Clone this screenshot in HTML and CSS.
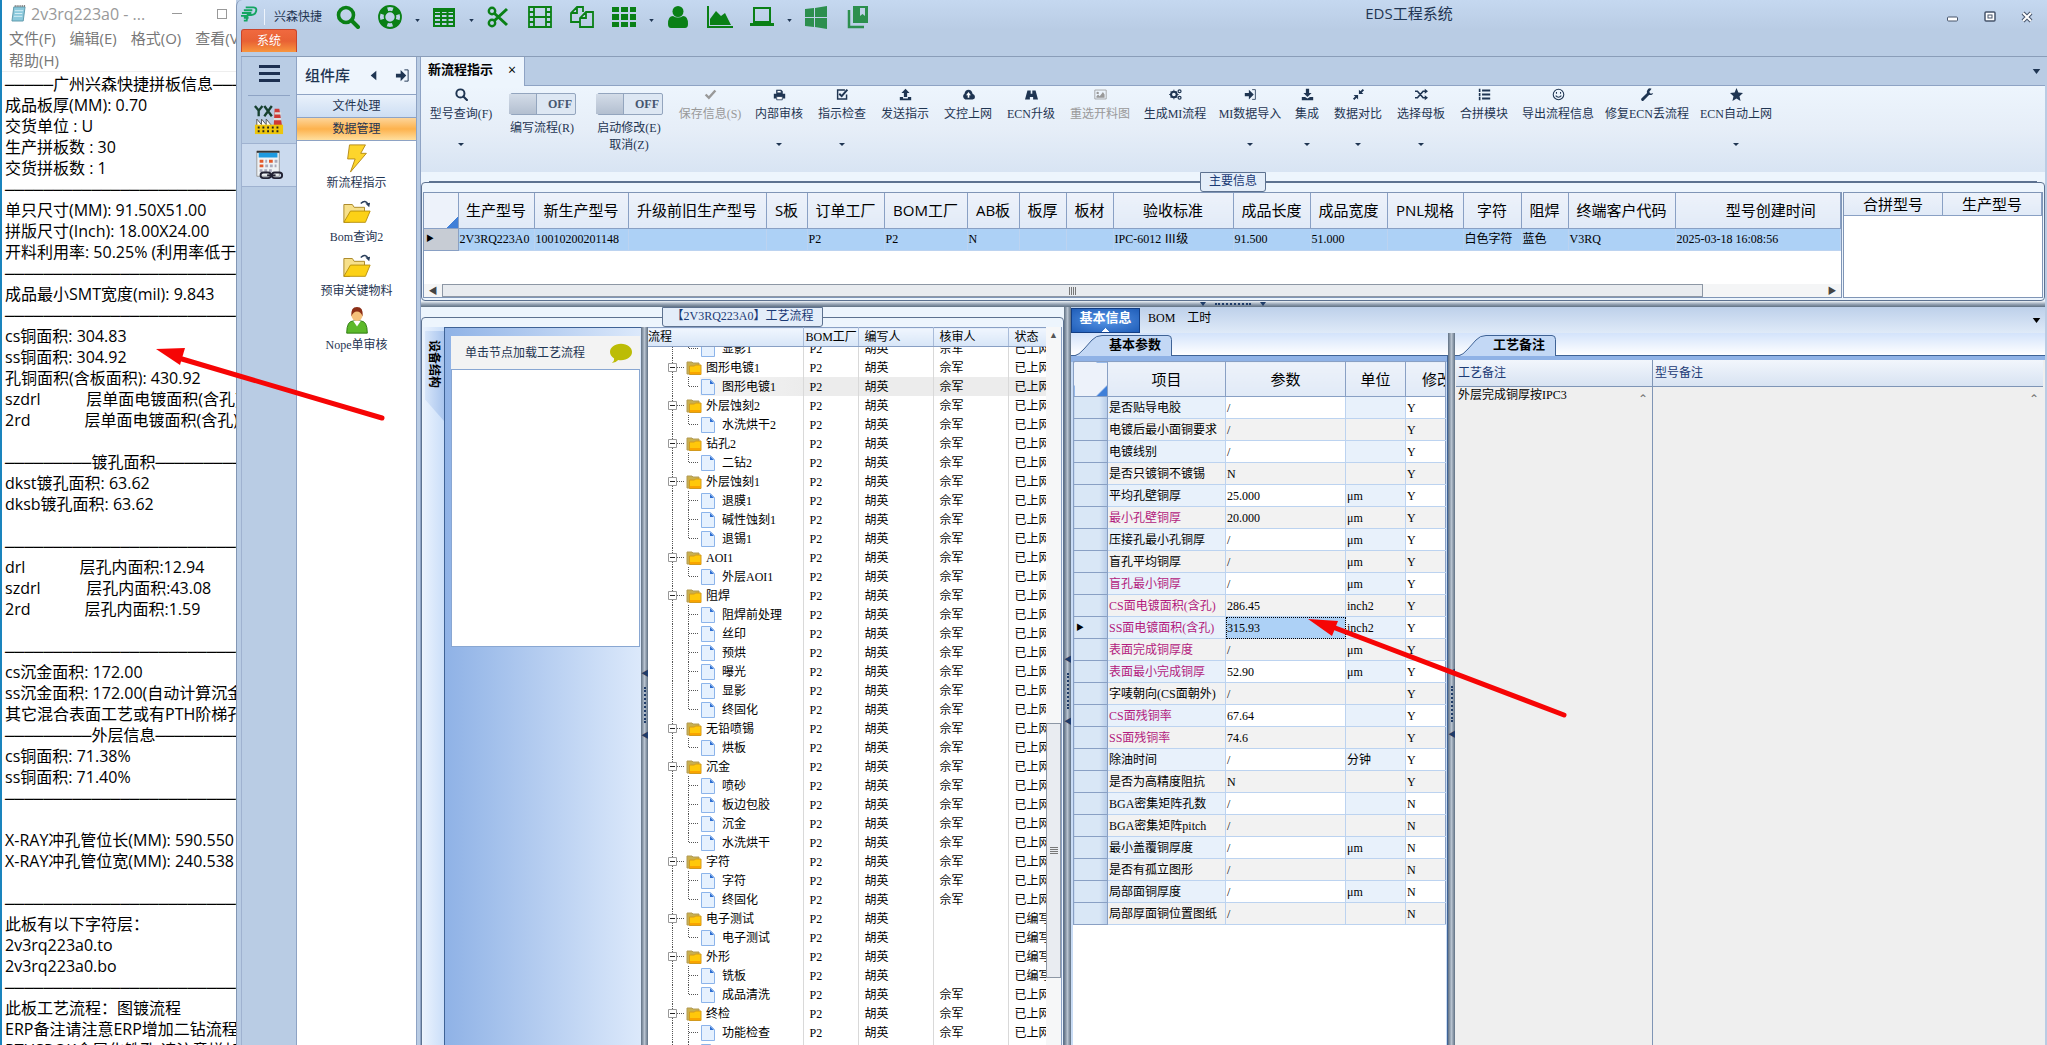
FILE: index.html
```html
<!DOCTYPE html>
<html lang="zh-CN">
<head>
    <meta charset="UTF-8">
    <meta name="viewport" content="width=device-width, initial-scale=1.0">
    <title>EDS工程系统</title>
    <link rel="stylesheet" href="styles.css">
</head>
<body>
    <!-- Shared icons -->
    <svg class="defs" aria-hidden="true">
        <symbol id="i-search" viewBox="0 0 24 24"><circle cx="10" cy="10" r="7.5" fill="none" stroke="currentColor" stroke-width="3.6"/><path d="M15.5 15.5L22 22" stroke="currentColor" stroke-width="4" stroke-linecap="round"/></symbol>
        <symbol id="i-login" viewBox="0 0 16 16"><path d="M1 6h5V2l6 6-6 6v-4H1z" fill="currentColor"/><path d="M10 2h4v12h-4" fill="none" stroke="currentColor"/></symbol>
        <symbol id="i-caret" viewBox="0 0 6 4"><path d="M0 0h6L3 4z" fill="currentColor"/></symbol>
        <symbol id="i-open" viewBox="0 0 36 19"><path d="M24.5 0v19M29 9.500h7" stroke="#555" stroke-dasharray="1 1"/><path d="M20.500 5.500h8v8h-8z" fill="#fff" stroke="#999"/><path d="M22 9.500h5" stroke="#222"/></symbol>
        <symbol id="i-mid" viewBox="0 0 52 19"><path d="M24.500 0v19M40.500 0v19M41 9.500h10" stroke="#555" stroke-dasharray="1 1"/></symbol>
        <symbol id="i-last" viewBox="0 0 52 19"><path d="M24.500 0v19M40.500 0v9M41 9.500h10" stroke="#555" stroke-dasharray="1 1"/></symbol>
        <symbol id="i-folder" viewBox="0 0 16 16"><path d="M1 2h5l1 1h6v11H1z" fill="#c9b04e" stroke="#b39a55"/><path d="M3.500 6h5l1-1H15v9.500H3.500z" fill="#ffc80a" stroke="#d29a1e"/><path d="M4 12h11v2H4z" fill="#f9a400"/></symbol>
        <symbol id="i-doc" viewBox="0 0 14 16"><path d="M.5 .5h9l4 4v11H.5z" fill="#e6f1fe" stroke="#8cb4ea"/><path d="M9 1v4h4z" fill="#2e6fd2"/></symbol>
        <symbol id="i-folder-open" viewBox="0 0 32 26"><path d="M2 5h9l2 3h11v4L8 24H2z" fill="#f7e08a" stroke="#a98522"/><path d="M2 24L9 12h21l-5 12z" fill="#fcd116" stroke="#b8900e"/><path d="M20 4q5-5 8 1" fill="none" stroke="#2b3f5c" stroke-width="1.500"/><path d="M25 4l5-1-1 5z" fill="#2b3f5c"/></symbol>
    </svg>

    <section class="notepad">
        <header class="np-title">
            <svg class="np-icon" viewBox="0 0 16 18"><path d="M3 2h12l-2 15H1z" fill="#8cc9dc" stroke="#5c97aa"/><path d="M4 1h11" stroke="#777" stroke-width="2" stroke-dasharray="1 1"/><path d="M4 6h9M4 9h8M3 12h9" stroke="#d9f0f6"/></svg>
            <span>2v3rq223a0 - ...</span>
            <button class="np-min" aria-label="最小化"></button>
            <button class="np-max" aria-label="最大化"></button>
        </header>
        <nav class="np-menu">
            <a href="#">文件(F)</a><a href="#">编辑(E)</a><a href="#">格式(O)</a><a href="#">查看(V)</a><a href="#">帮助(H)</a>
        </nav>
        <textarea class="np-text" aria-label="文本" wrap="off" spellcheck="false">
─────广州兴森快捷拼板信息─────
成品板厚(MM): 0.70
交货单位 : U
生产拼板数 : 30
交货拼板数 : 1
─────────────────────────
单只尺寸(MM): 91.50X51.00
拼版尺寸(Inch): 18.00X24.00
开料利用率: 50.25% (利用率低于
─────────────────────────
成品最小SMT宽度(mil): 9.843
─────────────────────────
cs铜面积: 304.83
ss铜面积: 304.92
孔铜面积(含板面积): 430.92
szdrl           层单面电镀面积(含孔)
2rd             层单面电镀面积(含孔)

─────────镀孔面积─────────
dkst镀孔面积: 63.62
dksb镀孔面积: 63.62

─────────────────────────
drl             层孔内面积:12.94
szdrl           层孔内面积:43.08
2rd             层孔内面积:1.59

─────────────────────────
cs沉金面积: 172.00
ss沉金面积: 172.00(自动计算沉金
其它混合表面工艺或有PTH阶梯孔
─────────外层信息─────────
cs铜面积: 71.38%
ss铜面积: 71.40%
─────────────────────────

X-RAY冲孔管位长(MM): 590.550
X-RAY冲孔管位宽(MM): 240.538

─────────────────────────
此板有以下字符层：
2v3rq223a0.to
2v3rq223a0.bo
─────────────────────────
此板工艺流程：图镀流程
ERP备注请注意ERP增加二钻流程
PTHSROK金属化铣孔,请注意增加</textarea>
    </section>

    <main class="app">
        <header class="titlebar">
            <div class="quick">
                <svg class="logo" viewBox="0 0 18 18"><path d="M5 2h8q4 0 3 4t-5 4H7l-1 6H3M3 5h9M1 8h10M0 11h6M3 13h5" fill="none" stroke="#14a562" stroke-width="2"/></svg>
                <span class="brand">兴森快捷</span>
                <button class="q search" aria-label="搜索"><svg viewBox="0 0 24 24"><use href="#i-search"/></svg></button>
                <button class="q wide" aria-label="帮助"><svg viewBox="0 0 24 24"><circle cx="12" cy="12" r="8.200" fill="none" stroke="currentColor" stroke-width="6" stroke-dasharray="7.500 5.380" stroke-dashoffset="-2.700"/><circle cx="12" cy="12" r="11" fill="none" stroke="currentColor" stroke-width="1.800"/><circle cx="12" cy="12" r="5.500" fill="none" stroke="currentColor" stroke-width="1.600"/></svg><svg class="caret"><use href="#i-caret"/></svg></button>
                <button class="q wide" aria-label="表格"><svg viewBox="0 0 24 24"><path d="M2 4h20v17H2zM2 9h20M2 13h20M2 17h20M9 6v15M15.500 6v15" fill="none" stroke="currentColor" stroke-width="2"/><path d="M2 3h20v4H2z" fill="currentColor"/></svg><svg class="caret"><use href="#i-caret"/></svg></button>
                <button class="q" aria-label="剪切"><svg viewBox="0 0 24 24"><circle cx="6" cy="6" r="3.200" fill="none" stroke="currentColor" stroke-width="2.400"/><circle cx="6" cy="18" r="3.200" fill="none" stroke="currentColor" stroke-width="2.400"/><path d="M8 8l13 12M8 16L21 4" stroke="currentColor" stroke-width="3"/></svg></button>
                <button class="q" aria-label="影片"><svg viewBox="0 0 24 24"><path d="M1 2h22v20H1zM6 2v20M18 2v20M6 12h12M1 7h5M1 12h5M1 17h5M18 7h5M18 12h5M18 17h5" fill="none" stroke="currentColor" stroke-width="1.800"/></svg></button>
                <button class="q" aria-label="复制"><svg viewBox="0 0 24 24"><path d="M10 17H1V8l6-6h6v5M7 2v6H1M16 7h7v15H10V13zM16 7v6h-6" fill="none" stroke="currentColor" stroke-width="1.800"/></svg></button>
                <button class="q wide" aria-label="模块"><svg viewBox="0 0 24 24"><path d="M0 2h7v5H0zM9 2h7v5H9zM18 2h6v5h-6zM0 9h7v6H0zM9 9h7v6H9zM18 9h6v6h-6zM0 17h7v5H0zM9 17h7v5H9zM18 17h6v5h-6z" fill="currentColor"/></svg><svg class="caret"><use href="#i-caret"/></svg></button>
                <button class="q" aria-label="用户"><svg viewBox="0 0 24 24"><circle cx="12" cy="6.500" r="5.500" fill="currentColor"/><path d="M5 23q-3 0-3-4 0-8 5-8 5 3 10 0 5 0 5 8 0 4-3 4z" fill="currentColor"/></svg></button>
                <button class="q" aria-label="图表"><svg viewBox="0 0 26 24"><path d="M1 1v21h25" fill="none" stroke="currentColor" stroke-width="2"/><path d="M3 20v-6l6-8 5 5 4-3 6 12z" fill="currentColor"/></svg></button>
                <button class="q wide" aria-label="电脑"><svg viewBox="0 0 24 24"><path d="M4 3h16v14H4z" fill="none" stroke="currentColor" stroke-width="2"/><path d="M0 18h24v3H0z" fill="currentColor"/></svg><svg class="caret"><use href="#i-caret"/></svg></button>
                <button class="q sea" aria-label="窗口"><svg viewBox="0 0 24 24"><path d="M1 4l9-1v9H1zM11 3l12-2v11H11zM1 13h9v9l-9-1zM11 13h12v11l-12-2z" fill="currentColor"/></svg></button>
                <button class="q sea" aria-label="收藏"><svg viewBox="0 0 24 24"><path d="M7 1h15v17H7z" fill="currentColor"/><path d="M14 3h5v8l-2.500-2-2.500 2z" fill="#bfd1e9"/><path d="M3 5v17h15" fill="none" stroke="currentColor" stroke-width="2.500"/></svg></button>
            </div>
            <h1>EDS工程系统</h1>
            <div class="winbtns">
                <button aria-label="最小化"><svg viewBox="0 0 12 12"><rect x=".5" y="6" width="10" height="4" rx="1" fill="#fff" stroke="#46546b"/></svg></button>
                <button aria-label="还原"><svg viewBox="0 0 12 12"><rect x="1" y="1" width="10" height="9" rx="1" fill="#fff" stroke="#46546b" stroke-width="1.500"/><rect x="4" y="4" width="4" height="3" fill="#fff" stroke="#46546b"/></svg></button>
                <button aria-label="关闭"><svg viewBox="0 0 12 12"><path d="M2 2l8 8M10 2l-8 8" stroke="#46546b" stroke-width="4"/><path d="M2 2l8 8M10 2l-8 8" stroke="#fff" stroke-width="2"/></svg></button>
            </div>
            <button class="sys-tab">系统</button>
        </header>

        <div class="workspace">
            <nav class="rail">
                <button class="burger" aria-label="菜单"><i></i><i></i><i></i></button>
                <button class="rail-item" aria-label="工厂"><svg viewBox="0 0 32 32"><path d="M1 1l4 5v6M9 1L5 6M11 1l8 11M19 1l-8 11" fill="none" stroke="#16402f" stroke-width="2.500"/><path d="M22 4h5l3 19h-9z" fill="#cf3a36"/><path d="M22 9h7M21 15h8" stroke="#ddd" stroke-width="2.500"/><path d="M3 22v-7l5 6v-6l5 6v-6l5 6v2z" fill="#fff" stroke="#555"/><path d="M1 21h30v10H1z" fill="#edc50b"/><path d="M4 24h25M4 28h25" stroke="#222" stroke-width="2" stroke-dasharray="2 3"/></svg></button>
                <button class="rail-item active" aria-label="数据"><svg viewBox="0 0 32 32"><path d="M3 1h24v27H3z" fill="#eef2f5" stroke="#999"/><path d="M3 1h24v2H3z" fill="#333"/><path d="M5 3h20v5H5z" fill="#1d9ae0"/><path d="M6 12h4M16 12h4M6 17h4" stroke="#e25a2b" stroke-width="3"/><path d="M12 12h2M22 12h3M12 17h12M6 22h14" stroke="#aab" stroke-width="3" stroke-dasharray="3 2"/><rect x="7" y="24" width="11" height="6" rx="3" fill="none" stroke="#223" stroke-width="2"/><rect x="19" y="24" width="11" height="6" rx="3" fill="none" stroke="#223" stroke-width="2"/><path d="M14 27h9" stroke="#223" stroke-width="2"/></svg></button>
            </nav>

            <aside class="library">
                <div class="lib-head">
                    <h2>组件库</h2>
                    <button aria-label="折叠"><svg viewBox="0 0 16 16"><path d="M11 3v10L5 8z" fill="currentColor"/></svg></button>
                    <button aria-label="固定"><svg viewBox="0 0 16 16"><use href="#i-login"/></svg></button>
                </div>
                <button class="lib-group">文件处理</button>
                <button class="lib-group on">数据管理</button>
                <button class="lib-item"><svg viewBox="0 0 32 32"><path d="M8 2h17l-5 9h6L9 31l5-14H6z" fill="#fdd52c" stroke="#b48a17"/></svg>新流程指示</button>
                <button class="lib-item"><svg viewBox="0 0 32 26"><use href="#i-folder-open"/></svg>Bom查询2</button>
                <button class="lib-item"><svg viewBox="0 0 32 26"><use href="#i-folder-open"/></svg>预审关键物料</button>
                <button class="lib-item"><svg viewBox="0 0 32 32"><path d="M5 30q0-13 7-13h8q7 0 7 13z" fill="#5cb92a" stroke="#2d7a10"/><path d="M12 17l4 6 4-6z" fill="#fff"/><circle cx="16" cy="11" r="6" fill="#f5c07a"/><path d="M10 12q-1-10 6-10t6 10q-2-5-6-5t-6 5z" fill="#8c2e16"/></svg>Nope单审核</button>
            </aside>

            <section class="page">
                <div class="page-tabs">
                    <button class="page-tab">新流程指示 <span>×</span></button>
                    <svg class="more"><use href="#i-caret"/></svg>
                </div>

                <div class="ribbon">
                    <button class="tool c5 drop"><svg viewBox="0 0 24 24"><use href="#i-search"/></svg>型号查询(F)</button>
                    <label class="switch"><span class="track"><input type="checkbox"><b>OFF</b></span>编写流程(R)</label>
                    <label class="switch"><span class="track"><input type="checkbox"><b>OFF</b></span>启动修改(E)<br>取消(Z)</label>
                    <button class="tool c5 off" disabled><svg viewBox="0 0 16 16"><path d="M2 8l4 4 8-9" fill="none" stroke="currentColor" stroke-width="3"/></svg>保存信息(S)</button>
                    <button class="tool c4 drop"><svg viewBox="0 0 16 16"><path d="M4 7V2h6l2 2v3M1 13V7h14v6h-3v-2H4v2z" fill="currentColor"/><path d="M4.500 10.500h7v4h-7zM5 3h5v3H5z" fill="#fff" stroke="currentColor"/></svg>内部审核</button>
                    <button class="tool c4 drop"><svg viewBox="0 0 16 16"><path d="M13 8v5.500H2v-11h9" fill="none" stroke="currentColor" stroke-width="1.800"/><path d="M4 7l3 3 7-8" fill="none" stroke="currentColor" stroke-width="2.500"/></svg>指示检查</button>
                    <button class="tool c4"><svg viewBox="0 0 16 16"><path d="M8 1l5 5h-3v5H6V6H3zM1 11h4v2h6v-2h4v4H1z" fill="currentColor"/></svg>发送指示</button>
                    <button class="tool c4"><svg viewBox="0 0 16 16"><path d="M4 14a4 4 0 0 1-1-7q1-5 5-5t5 5q3 1 3 4t-3 3z" fill="currentColor"/><path d="M8 5l3 4H9v3H7V9H5z" fill="#fff"/></svg>文控上网</button>
                    <button class="tool c4"><svg viewBox="0 0 16 16"><path d="M3 3h4v4h2V3h4l3 11h-6v-3H6v3H0z" fill="currentColor"/></svg>ECN升级</button>
                    <button class="tool c5 off" disabled><svg viewBox="0 0 16 16"><path d="M1 2.500h14v11H1z" fill="none" stroke="currentColor"/><circle cx="4.500" cy="6" r="1.500" fill="currentColor"/><path d="M3 12v-2l2-2 2 2 4-5 2 3v4z" fill="currentColor"/></svg>重选开料图</button>
                    <button class="tool c5"><svg viewBox="0 0 16 16"><circle cx="6" cy="8" r="3.500" fill="none" stroke="currentColor" stroke-width="2.500"/><path d="M6 2v12M0 8h12M2 4l8 8M10 4l-8 8" stroke="currentColor" stroke-width="1" stroke-dasharray="2.500 7"/><circle cx="13" cy="4" r="1.800" fill="none" stroke="currentColor" stroke-width="1.500"/><circle cx="13" cy="12" r="1.800" fill="none" stroke="currentColor" stroke-width="1.500"/></svg>生成MI流程</button>
                    <button class="tool c5 drop"><svg viewBox="0 0 16 16"><use href="#i-login"/></svg>MI数据导入</button>
                    <button class="tool c2 drop"><svg viewBox="0 0 16 16"><path d="M6 1h4v5h3l-5 5-5-5h3zM1 11h4l3 2 3-2h4v4H1z" fill="currentColor"/></svg>集成</button>
                    <button class="tool c4 drop"><svg viewBox="0 0 16 16"><path d="M14 2l-4 4M2 14l4-4" stroke="currentColor" stroke-width="2.500"/><path d="M8.500 2v5.500H14zM7.500 14V8.500H2z" fill="currentColor"/></svg>数据对比</button>
                    <button class="tool c4 drop"><svg viewBox="0 0 16 16"><path d="M0 4h3l7 8h3M0 12h3l7-8h3" fill="none" stroke="currentColor" stroke-width="2"/><path d="M12 1l4 3-4 3zM12 9l4 3-4 3z" fill="currentColor"/></svg>选择母板</button>
                    <button class="tool c4"><svg viewBox="0 0 16 16"><path d="M5 3h10M5 8h10M5 13h10" stroke="currentColor" stroke-width="2.500"/><path d="M2 1v14" stroke="currentColor" stroke-width="2" stroke-dasharray="4 1"/></svg>合拼模块</button>
                    <button class="tool c6"><svg viewBox="0 0 16 16"><circle cx="8" cy="8" r="6.500" fill="none" stroke="currentColor" stroke-width="1.300"/><path d="M5.500 5v2M10.500 5v2M4.500 9.500q3.500 4 7 0" fill="none" stroke="currentColor" stroke-width="1.300"/></svg>导出流程信息</button>
                    <button class="tool c7"><svg viewBox="0 0 16 16"><path d="M2 14l7-7" stroke="currentColor" stroke-width="3.500" stroke-linecap="round"/><path d="M13 1a4 4 0 1 0 2 5l-3 1-2-2z" fill="currentColor"/></svg>修复ECN丢流程</button>
                    <button class="tool c6 drop"><svg viewBox="0 0 16 16"><path d="M8 0l2.300 5.500 5.700.5-4.300 4L13 16l-5-3-5 3 1.300-6L0 6l5.700-.5z" fill="currentColor"/></svg>ECN自动上网</button>
                </div>

                <fieldset class="group main-info">
                    <legend>主要信息</legend>
                    <div class="info-row">
                        <div class="info-grid">
                            <table class="grid wide-grid">
                                <colgroup><col class="w34"><col class="w76"><col class="w94"><col class="w138"><col class="w41"><col class="w77"><col class="w83"><col class="w52"><col class="w47"><col class="w47"><col class="w120"><col class="w77"><col class="w77"><col class="w76"><col class="w58"><col class="w47"><col class="w107"><col></colgroup>
                                <thead><tr><th class="corner"></th><th>生产型号</th><th>新生产型号</th><th>升级前旧生产型号</th><th>S板</th><th>订单工厂</th><th>BOM工厂</th><th>AB板</th><th>板厚</th><th>板材</th><th>验收标准</th><th>成品长度</th><th>成品宽度</th><th>PNL规格</th><th>字符</th><th>阻焊</th><th>终端客户代码</th><th class="time">型号创建时间</th></tr></thead>
                                <tbody><tr><td class="head">▶</td><td>2V3RQ223A0</td><td>10010200201148</td><td></td><td></td><td>P2</td><td>P2</td><td>N</td><td></td><td></td><td>IPC-6012 Ⅲ级</td><td>91.500</td><td>51.000</td><td></td><td>白色字符</td><td>蓝色</td><td>V3RQ</td><td>2025-03-18 16:08:56</td></tr></tbody>
                            </table>
                            <div class="hscroll"><span>◀</span><div class="hthumb"><i class="grip"></i></div><span class="end">▶</span></div>
                        </div>
                        <div class="pair-grid">
                            <table class="grid">
                                <thead><tr><th>合拼型号</th><th>生产型号</th></tr></thead>
                            </table>
                        </div>
                    </div>
                </fieldset>

                <div class="hsplit"><svg><use href="#i-caret"/></svg><i></i><svg><use href="#i-caret"/></svg></div>

                <div class="lower">
                    <fieldset class="group flow">
                        <legend>【2V3RQ223A0】工艺流程</legend>
                        <div class="flow-row">
                            <div class="side-tabs"><button>设备结构</button></div>
                            <div class="device">
                                <div class="hint">单击节点加载工艺流程
                                    <svg viewBox="0 0 24 24"><path d="M12 2c7 0 12 4 12 9s-5 9-12 9c-1 0-2 0-3-.3Q6 23 2 23q3-2 2.500-5Q0 15 0 11c0-5 5-9 12-9z" fill="#bcbc06"/></svg>
                                </div>
                                <div class="device-box"></div>
                            </div>
                            <div class="vsplit"><b>◀</b><i></i><b>◀</b></div>
                            <div class="tree">
                                <table class="tree-table tree-head">
                                    <thead><tr><th class="t-name">流程</th><th class="t-fac">BOM工厂</th><th class="t-who">编写人</th><th class="t-who">核审人</th><th>状态</th></tr></thead>
                                </table>
                                <div class="tree-view">
                                    <table class="tree-table"><tbody id="tree"></tbody></table>
                                </div>
                            </div>
                            <div class="vscroll"><span>▲</span><div class="vthumb"><i class="grip"></i></div></div>
                        </div>
                    </fieldset>

                    <div class="vsplit outer"><b>◀</b><i></i><b>◀</b></div>

                    <section class="detail">
                        <div class="top-tabs">
                            <button class="on">基本信息</button><button>BOM</button><button>工时</button>
                            <svg class="more"><use href="#i-caret"/></svg>
                        </div>
                        <div class="detail-row">
                            <div class="params">
                                <div class="slant-bar"><button class="slant"><svg viewBox="0 0 98 21" preserveAspectRatio="none"><path d="M0 21Q5 20 10 14L18 5Q22 .5 28 .5H94q3.500 0 3.500 4V21" fill="#c3d8f5" stroke="#3f6396"/></svg><span>基本参数</span></button></div>
                                <div class="params-body">
                                    <table class="grid param-grid">
                                        <thead><tr><th class="corner w34"></th><th class="w118">项目</th><th class="w120">参数</th><th class="w60">单位</th><th class="cut">修改</th></tr></thead>
                                        <tbody id="params"></tbody>
                                    </table>
                                </div>
                            </div>
                            <div class="vsplit"><b>◀</b><i></i><b>◀</b></div>
                            <div class="notes">
                                <div class="slant-bar"><button class="slant"><svg viewBox="0 0 98 21" preserveAspectRatio="none"><path d="M0 21Q5 20 10 14L18 5Q22 .5 28 .5H94q3.500 0 3.500 4V21" fill="#c3d8f5" stroke="#3f6396"/></svg><span>工艺备注</span></button></div>
                                <div class="notes-body">
                                    <div class="note process">
                                        <label for="note1">工艺备注</label>
                                        <div class="note-text"><textarea id="note1" spellcheck="false">外层完成铜厚按IPC3</textarea><span>⌃</span></div>
                                    </div>
                                    <div class="note model">
                                        <label for="note2">型号备注</label>
                                        <div class="note-text"><textarea id="note2"></textarea><span>⌃</span></div>
                                    </div>
                                </div>
                            </div>
                        </div>
                    </section>
                </div>
            </section>
        </div>
    </main>

    <!-- Red marker arrows over both windows -->
    <svg class="mark mark-left" viewBox="0 0 236 84"><path d="M26 14L226 73" stroke="#f60505" stroke-width="5" stroke-linecap="round"/><path d="M0 4L29 3 24 20z" fill="#f60505"/></svg>
    <svg class="mark mark-right" viewBox="0 0 268 110"><path d="M22 10L256 99" stroke="#f60505" stroke-width="5" stroke-linecap="round"/><path d="M0 3L30 5 24 20z" fill="#f60505"/></svg>

    <script>
        // group name, then its steps
        const flow = [
            ['图形电镀1', ['图形电镀1']],
            ['外层蚀刻2', ['水洗烘干2']],
            ['钻孔2', ['二钻2']],
            ['外层蚀刻1', ['退膜1', '碱性蚀刻1', '退锡1']],
            ['AOI1', ['外层AOI1']],
            ['阻焊', ['阻焊前处理', '丝印', '预烘', '曝光', '显影', '终固化']],
            ['无铅喷锡', ['烘板']],
            ['沉金', ['喷砂', '板边包胶', '沉金', '水洗烘干']],
            ['字符', ['字符', '终固化']],
            ['电子测试', ['电子测试']],
            ['外形', ['铣板', '成品清洗']],
            ['终检', ['功能检查', '外观检查']]
        ];
        const draft = ['电子测试', '外形', '铣板'];
        const tree = document.getElementById('tree');

        function addRow(name, guide, icon) {
            const isDraft = draft.includes(name);
            const g = guide === 'open'
                ? '<button class="fold" aria-label="折叠"><svg viewBox="0 0 36 19"><use href="#i-open"/></svg></button>'
                : `<svg class="guide" viewBox="0 0 52 19"><use href="#i-${guide}"/></svg>`;
            const row = document.createElement('tr');
            row.innerHTML = `<td class="t-name"><div class="node">${g}<svg class="${icon}"><use href="#i-${icon}"/></svg>${name}</div></td>
                <td class="t-fac">P2</td><td class="t-who">胡英</td>
                <td class="t-who">${isDraft ? '' : '佘军'}</td><td>${isDraft ? '已编写' : '已上网'}</td>`;
            tree.appendChild(row);
            return row;
        }

        addRow('显影1', 'last', 'doc');
        flow.forEach(([group, steps]) => {
            addRow(group, 'open', 'folder');
            steps.forEach((step, i) => {
                const row = addRow(step, i === steps.length - 1 ? 'last' : 'mid', 'doc');
                if (step === '图形电镀1') row.classList.add('current');
            });
        });

        // item, value, unit, editable, highlighted
        const params = [
            ['是否贴导电胶', '/', '', 'Y'],
            ['电镀后最小面铜要求', '/', '', 'Y'],
            ['电镀线别', '/', '', 'Y'],
            ['是否只镀铜不镀锡', 'N', '', 'Y'],
            ['平均孔壁铜厚', '25.000', 'μm', 'Y'],
            ['最小孔壁铜厚', '20.000', 'μm', 'Y', 1],
            ['压接孔最小孔铜厚', '/', 'μm', 'Y'],
            ['盲孔平均铜厚', '/', 'μm', 'Y'],
            ['盲孔最小铜厚', '/', 'μm', 'Y', 1],
            ['CS面电镀面积(含孔)', '286.45', 'inch2', 'Y', 1],
            ['SS面电镀面积(含孔)', '315.93', 'inch2', 'Y', 1],
            ['表面完成铜厚度', '/', 'μm', 'Y', 1],
            ['表面最小完成铜厚', '52.90', 'μm', 'Y', 1],
            ['字唛朝向(CS面朝外)', '/', '', 'Y'],
            ['CS面残铜率', '67.64', '', 'Y', 1],
            ['SS面残铜率', '74.6', '', 'Y', 1],
            ['除油时间', '/', '分钟', 'Y'],
            ['是否为高精度阻抗', 'N', '', 'Y'],
            ['BGA密集矩阵孔数', '/', '', 'N'],
            ['BGA密集矩阵pitch', '/', '', 'N'],
            ['最小盖覆铜厚度', '/', 'μm', 'N'],
            ['是否有孤立图形', '/', '', 'N'],
            ['局部面铜厚度', '/', 'μm', 'N'],
            ['局部厚面铜位置图纸', '/', '', 'N']
        ];
        document.getElementById('params').innerHTML = params.map(([item, value, unit, edit, hot]) => {
            const sel = value === '315.93';
            return `<tr><td class="head">${sel ? '▶' : ''}</td><td class="item${hot ? ' hot' : ''}">${item}</td>
                <td class="${sel ? 'picked' : ''}">${value}</td><td class="unit">${unit}</td><td>${edit}</td></tr>`;
        }).join('');
    </script>
</body>
</html>
```

FILE: styles.css
```css
* {
    box-sizing: border-box;
}
body {
    margin: 0;
    height: 100vh;
    overflow: hidden;
    position: relative;
    display: flex;
    background: #bbcde5;
    color: #000;
    font: 12px/16px "Liberation Serif", "Noto Sans CJK SC", serif;
}
button {
    margin: 0;
    padding: 0;
    border: 0;
    background: none;
    color: inherit;
    font: inherit;
    white-space: nowrap;
}
textarea {
    display: block;
    border: 0;
    margin: 0;
    padding: 0;
    resize: none;
    overflow: hidden;
    background: none;
    color: #000;
    font: inherit;
}
h1, h2 {
    margin: 0;
    font-weight: normal;
}
svg {
    display: block;
    flex: none;
}
table {
    border-collapse: collapse;
    table-layout: fixed;
    width: 100%;
}
.defs {
    position: absolute;
    width: 0;
    height: 0;
}

/* Notepad window */
.notepad {
    flex: none;
    width: 236px;
    overflow: hidden;
    display: flex;
    flex-direction: column;
    border-left: 2px solid #1a84bd;
    background: #fff;
    font-family: "Open Sans", "Liberation Mono", "Noto Sans CJK SC", sans-serif;
}
.np-title {
    display: flex;
    align-items: center;
    gap: 5px;
    height: 27px;
    padding-left: 9px;
    font-size: 16px;
    color: #999;
}
.np-title span {
    width: 136px;
    white-space: nowrap;
}
.np-icon {
    width: 15px;
    height: 17px;
}
.np-min {
    width: 10px;
    border-top: 1px solid #999;
}
.np-max {
    width: 10px;
    height: 10px;
    margin-left: 30px;
    border: 1px solid #999;
}
.np-menu {
    display: flex;
    flex-wrap: wrap;
    column-gap: 14px;
    width: 260px;
    height: 45px;
    padding-left: 7px;
    border-bottom: 1px solid #eee;
    font-size: 15px;
    line-height: 22px;
}
.np-menu a {
    color: #777;
    text-decoration: none;
}
.np-text {
    flex: 1;
    width: 100%;
    padding: 2px 0 0 3px;
    font-size: 16px;
    line-height: 21px;
    white-space: pre;
}

/* Main window */
.app {
    flex: 1;
    min-width: 0;
    display: flex;
    flex-direction: column;
    padding-left: 4px;
    border-left: 1px solid #8296b4;
    border-top-left-radius: 6px;
    background: linear-gradient(#c5d8f0, #b9cce4 30px);
}
.titlebar {
    flex: none;
    display: grid;
    grid-template-columns: auto 1fr auto;
    grid-template-rows: 29px 24px;
    height: 57px;
    border-bottom: 1px solid #8a9db8;
    color: #1f3552;
}
.quick {
    display: flex;
    align-items: center;
    gap: 16px;
    height: 34px;
    color: #0a8016;
}
.logo {
    width: 17px;
    height: 18px;
    margin-bottom: 6px;
}
.brand {
    margin-left: -10px;
    padding-left: 9px;
    border-left: 1px solid #eef4fc;
    color: #1f3552;
    white-space: nowrap;
}
.q {
    display: flex;
    align-items: center;
    gap: 12px;
}
.q svg {
    width: 26px;
    height: 24px;
}
.q .caret {
    width: 5px;
    height: 3px;
    margin-top: 6px;
    color: #1f3552;
}
.q.search {
    margin-left: -3px;
}
.q.wide {
    margin-right: -5px;
}
.sea {
    color: #2c8f4e;
}
.titlebar h1 {
    font: 15px/26px "Open Sans", "Noto Sans CJK SC", sans-serif;
    text-align: center;
    white-space: nowrap;
}
.winbtns {
    display: flex;
    justify-content: flex-end;
    align-items: center;
    gap: 25px;
    height: 34px;
    padding-right: 14px;
}
.winbtns svg {
    width: 12px;
    height: 12px;
}
.sys-tab {
    grid-column: 1;
    width: 56px;
    height: 23px;
    border: 1px solid #c8452c;
    border-bottom: 0;
    border-radius: 3px 3px 0 0;
    background: linear-gradient(#f0693f, #e86134 50%, #f8953e);
    color: #fff;
}
.workspace {
    flex: 1;
    min-height: 0;
    display: flex;
}
.rail {
    flex: none;
    width: 56px;
    border-left: 1px solid #9fb2d0;
    border-right: 1px solid #8ea3c4;
    display: flex;
    flex-direction: column;
}
.burger {
    display: flex;
    flex-direction: column;
    align-items: center;
    gap: 4px;
    height: 39px;
    margin: 0 6px;
    padding-top: 8px;
    border-bottom: 1px solid #8ea3c4;
}
.burger i {
    width: 21px;
    height: 3px;
    background: #1c2f50;
}
.rail-item {
    display: flex;
    align-items: center;
    justify-content: center;
    height: 47px;
}
.rail-item svg {
    width: 30px;
    height: 32px;
}
.rail-item.active {
    height: 44px;
    border: solid #9fb2d0;
    border-width: 1px 0;
    background: #cbdaee;
}

/* Component library */
.library {
    flex: none;
    width: 120px;
    display: flex;
    flex-direction: column;
    border-right: 1px solid #8ea3c4;
    background: #fff;
    color: #1f3552;
}
.lib-head {
    display: flex;
    align-items: center;
    gap: 14px;
    height: 37px;
    padding-left: 8px;
    background: #eef5fd;
}
.lib-head h2 {
    flex: 1;
    font-size: 15px;
    font-weight: 500;
}
.lib-head svg {
    width: 15px;
    height: 15px;
}
.lib-head button:last-child {
    margin-right: 6px;
}
.lib-group {
    height: 23px;
    border-top: 1px solid #8ea3c4;
    background: linear-gradient(#e9f1fb, #cddef3);
}
.lib-group.on {
    height: 24px;
    border-bottom: 1px solid #8ea3c4;
    background: linear-gradient(#fdd59a, #fdb24d 50%, #ffdf9f);
}
.lib-item {
    display: flex;
    flex-direction: column;
    align-items: center;
    justify-content: space-between;
    height: 54px;
    padding: 2px 0 4px;
}
.lib-item svg {
    width: 30px;
    height: 30px;
}

/* Document page */
.page {
    flex: 1;
    min-width: 0;
    display: flex;
    flex-direction: column;
    margin: 0 2px 0 3px;
    border-left: 1px solid #8ea3c4;
    background: #edf5fd;
}
.page-tabs {
    flex: none;
    display: flex;
    align-items: center;
    justify-content: space-between;
    height: 29px;
    border-bottom: 1px solid #8ea3c4;
    background: #b9cce4;
}
.page-tab {
    align-self: flex-start;
    display: flex;
    align-items: center;
    justify-content: space-between;
    width: 104px;
    height: 29px;
    padding: 0 8px 4px 7px;
    border-right: 1px solid #8ea3c4;
    background: #edf5fd;
    font-size: 13px;
    font-weight: bold;
}
.page-tab span {
    font: 14px/14px "Open Sans", sans-serif;
}
.more {
    width: 9px;
    height: 5px;
    margin-right: 4px;
    color: #1f3552;
}
.ribbon {
    flex: none;
    display: flex;
    align-items: flex-start;
    gap: 15px;
    height: 86px;
    padding: 2px 0 0 10px;
    background: linear-gradient(#edf5fd, #e6eef8 50%, #d8e4f3);
    color: #1f3552;
    white-space: nowrap;
}
.tool {
    display: flex;
    flex-direction: column;
    align-items: center;
    gap: 5px;
}
.tool svg {
    width: 13px;
    height: 13px;
}
.tool.drop::after {
    content: "";
    margin-top: 16px;
    border: solid transparent;
    border-width: 3px 3px 0;
    border-top-color: #1f3552;
}
.tool.off {
    color: #999;
}
.c2 {
    width: 24px;
}
.c4 {
    width: 48px;
}
.c5 {
    width: 60px;
}
.c6 {
    width: 70px;
}
.c7 {
    width: 78px;
}
.switch {
    width: 72px;
    text-align: center;
    line-height: 17px;
}
.track {
    display: flex;
    align-items: center;
    justify-content: space-around;
    width: 66px;
    height: 22px;
    margin: 5px 0 5px 4px;
    border: 1px solid #93a5be;
    border-radius: 2px;
    background: #dde7f3;
    color: #45566f;
}
.track input {
    appearance: none;
    width: 28px;
    height: 20px;
    margin: 0 5px 0 -5px;
    border-right: 1px solid #93a5be;
    background: linear-gradient(#d3dce8, #b3bfd0);
}

/* Group boxes */
.group {
    min-width: 0;
    margin: 0;
    padding: 0 1px 2px;
    border: 1px solid #5d7290;
    border-radius: 4px;
}
.group legend {
    height: 20px;
    margin: 0 auto;
    padding: 0 8px;
    border: 1px solid #5d7290;
    border-radius: 0 0 3px 3px;
    background: #e3edf9;
    color: #1b3a75;
    line-height: 16px;
}
.main-info {
    flex: none;
    box-shadow: 0 -9px 0 -8px #5d7290;
}
.info-row {
    display: flex;
    gap: 1px;
    height: 106px;
}
.info-grid {
    flex: 1;
    min-width: 0;
    display: flex;
    flex-direction: column;
    justify-content: space-between;
    border: 1px solid #7f95b6;
    background: #fff;
}
.pair-grid {
    flex: none;
    width: 200px;
    border: 1px solid #7f95b6;
    background: #fff;
}
.grid th {
    height: 35px;
    padding: 0;
    overflow: hidden;
    border: solid #89a0c4;
    border-width: 0 1px 1px 0;
    background: linear-gradient(#edf2fa, #e1eaf7);
    font: 15px/20px "Open Sans", "Noto Sans CJK SC", sans-serif;
    white-space: nowrap;
}
.grid th.time {
    padding-left: 26px;
}
.pair-grid th {
    height: 22px;
}
.grid th.corner {
    background: linear-gradient(135deg, #edf2fa 83%, #3f7fd8 83%);
}
.grid td {
    height: 22px;
    padding: 0 0 0 1px;
    border-right: 1px solid #bcd3f0;
    border-bottom: 1px solid #bcd3f0;
    overflow: hidden;
    white-space: nowrap;
}
.wide-grid td {
    background: #add1f6;
}
.grid td.head {
    border-color: #89a0c4;
    padding-left: 2px;
    font-size: 8px;
}
.wide-grid td.head {
    background: #c7ccd4;
}
.w34 {
    width: 34px;
}
.w41 {
    width: 41px;
}
.w47 {
    width: 47px;
}
.w52 {
    width: 52px;
}
.w58 {
    width: 58px;
}
.w60 {
    width: 60px;
}
.w76 {
    width: 76px;
}
.w77 {
    width: 77px;
}
.w83 {
    width: 83px;
}
.w94 {
    width: 94px;
}
.w107 {
    width: 107px;
}
.w118 {
    width: 118px;
}
.w120 {
    width: 120px;
}
.w138 {
    width: 138px;
}
.hscroll {
    display: flex;
    align-items: center;
    height: 13px;
    background: #f4f5f6;
    color: #444;
    font-size: 9px;
}
.hscroll span {
    width: 18px;
    text-align: center;
}
.hscroll .end {
    margin-left: auto;
}
.hthumb {
    width: 89%;
    height: 13px;
    display: flex;
    align-items: center;
    justify-content: center;
    border: 1px solid #8d97a5;
    background: #e8ebef;
}
.grip {
    width: 8px;
    height: 8px;
    background: repeating-linear-gradient(90deg, #777 0 1px, transparent 1px 2px);
}
.hsplit {
    flex: none;
    display: flex;
    align-items: center;
    justify-content: center;
    gap: 9px;
    height: 6px;
    background: linear-gradient(#eef3f8, #9aa8b8 50%, #5f7083);
    color: #1f3c68;
}
.hsplit svg {
    width: 6px;
    height: 4px;
}
.hsplit i {
    width: 36px;
    border-top: 2px dotted #1f3c68;
}
.vsplit {
    flex: none;
    display: flex;
    flex-direction: column;
    align-items: center;
    justify-content: center;
    gap: 8px;
    width: 7px;
    padding-top: 30px;
    background: linear-gradient(90deg, #5f7083, #b7c2cf 50%, #5f7083);
    color: #1f3c68;
    font-size: 8px;
    line-height: 10px;
}
.vsplit i {
    height: 36px;
    border-left: 2px dotted #1f3c68;
}
.vsplit b {
    width: 7px;
}

/* Process flow */
.lower {
    flex: 1;
    min-height: 0;
    display: flex;
}
.flow {
    flex: none;
    width: 643px;
    height: calc(100% + 8px);
    padding-bottom: 0;
}
.flow-row {
    display: flex;
    height: 100%;
}
.side-tabs {
    flex: none;
    width: 21px;
    padding-top: 4px;
    background: linear-gradient(90deg, #eaf2fd, #cbdff9);
}
.side-tabs button {
    width: 21px;
    height: 90px;
    padding-bottom: 24px;
    background: linear-gradient(90deg, #dbe8fa, #a9c5ee);
    clip-path: polygon(10% 0, 100% 0, 100% 100%, 10% 76%);
    font-weight: bold;
    writing-mode: vertical-rl;
    text-orientation: sideways;
}
.device {
    flex: none;
    width: 197px;
    padding: 8px 1px 0 6px;
    border-left: 1px solid #3f6396;
    border-top: 1px solid #3f6396;
    background: linear-gradient(90deg, #8fb2e6, #dce9fb);
}
.hint {
    display: flex;
    align-items: center;
    justify-content: space-between;
    height: 33px;
    padding: 0 7px 0 14px;
    background: #f3f3f3;
    color: #1f3552;
}
.hint svg {
    width: 24px;
    height: 22px;
}
.device-box {
    height: 278px;
    border: 1px solid #89a7d2;
    background: #fff;
}
.tree {
    flex: 1;
    min-width: 0;
    display: flex;
    flex-direction: column;
    background: #fff;
}
.tree-head {
    flex: none;
}
.tree-view {
    flex: 1;
    min-height: 0;
    overflow: hidden;
}
.tree-view table {
    margin-top: -8px;
}
.tree-table th {
    height: 19px;
    padding: 0 0 0 6px;
    border-right: 1px solid #a9bcd9;
    border-bottom: 1px solid #89a0c4;
    border-top: 1px solid #89a0c4;
    background: linear-gradient(#f0f6fe, #d7e5f7);
    font-weight: normal;
    text-align: left;
    white-space: nowrap;
    overflow: hidden;
}
.tree-table th.t-name {
    padding-left: 0;
}
.tree-table th.t-fac {
    padding-left: 2px;
}
.tree-table td {
    height: 19px;
    padding: 0 0 0 6px;
    border-right: 1px solid #d9d9d9;
    overflow: hidden;
    white-space: nowrap;
}
.tree-table td.t-name {
    padding: 0;
}
.tree-table tr > :last-child {
    border-right: 0;
}
.t-name {
    width: 155px;
}
.t-fac {
    width: 55px;
}
.t-who {
    width: 75px;
}
.node {
    display: flex;
    align-items: center;
    height: 19px;
}
.fold svg {
    width: 36px;
    height: 19px;
}
.guide {
    width: 52px;
    height: 19px;
}
.folder {
    width: 18px;
    height: 16px;
    margin: 0 3px 0 1px;
}
.doc {
    width: 16px;
    height: 16px;
    margin-right: 6px;
}
.current td {
    background: #ececec;
}
.current td.t-name {
    background: linear-gradient(90deg, #fff 52px, #f6f6f6 52px, #ececec);
}
.vscroll {
    flex: none;
    width: 16px;
    background: #f6f7f8;
    border-right: 1px solid #89a0c4;
}
.vscroll span {
    display: block;
    height: 396px;
    text-align: center;
    font-size: 9px;
    color: #555;
}
.vthumb {
    height: 255px;
    display: flex;
    align-items: center;
    justify-content: center;
    border: 1px solid #8d97a5;
    background: #e9ecf1;
}
.vthumb .grip {
    background: repeating-linear-gradient(#777 0 1px, transparent 1px 2px);
}

/* Details */
.detail {
    flex: 1;
    min-width: 0;
    display: flex;
    flex-direction: column;
}
.top-tabs {
    flex: none;
    display: flex;
    align-items: center;
    height: 26px;
    background: linear-gradient(#bdd0ea, #dfeaf8);
}
.top-tabs button {
    height: 25px;
    padding: 0 4px 4px 8px;
}
.top-tabs button.on {
    width: 69px;
    padding: 0 0 4px;
    border: 1px solid #123e85;
    background: conic-gradient(from 135deg at 50% 19px, #fff 90deg, transparent 90deg), radial-gradient(#5795e6, #1f5db8);
    color: #fff;
    font-size: 13px;
    font-weight: bold;
}
.top-tabs .more {
    margin-left: auto;
    color: #000;
}
.detail-row {
    flex: 1;
    min-height: 0;
    display: flex;
}
.params {
    flex: none;
    width: 377px;
    display: flex;
    flex-direction: column;
}
.slant-bar {
    flex: none;
    height: 23px;
    padding: 2px 0 0 3px;
    border-bottom: 1px solid #3f6396;
    background: linear-gradient(#d3e3fb, #fff);
}
.slant {
    display: grid;
    width: 98px;
    height: 21px;
    font-size: 13px;
    font-weight: bold;
}
.slant > * {
    grid-area: 1 / 1;
}
.slant svg {
    width: 98px;
    height: 21px;
}
.slant span {
    padding-left: 24px;
    line-height: 20px;
}
.params-body {
    flex: 1;
    overflow: hidden;
    padding: 5px 1px 0 2px;
    border-right: 1px solid #3f6396;
    background: linear-gradient(#8fb2e6 6px, #c9dcf5 6px);
}
.param-grid {
    background: #fff;
    border: 1px solid #89a0c4;
}
.params-body::after {
    content: "";
    display: block;
    height: 100%;
    background: #fff;
}
.grid th.cut {
    padding-left: 16px;
    text-align: left;
    border-right: 0;
}
.param-grid td:last-child {
    border-right: 0;
}
.param-grid .head {
    background: linear-gradient(90deg, #d9e7f6 75%, #b7cce8);
}
.param-grid td.item, .param-grid td.unit {
    background: #e8f1fb;
}
.param-grid tr:nth-child(even) td:not(.head) {
    background: #f2f2f2;
}
.param-grid td.hot {
    color: #b31b7d;
}
.param-grid td.picked {
    outline: 1px dotted #000;
    outline-offset: -1px;
    background: #add1f6;
}
.notes {
    flex: 1;
    min-width: 0;
    display: flex;
    flex-direction: column;
}
.notes-body {
    flex: 1;
    display: flex;
    padding: 4px 2px 0 1px;
    background: linear-gradient(#8fb2e6 4px, #efefef 4px);
}
.note {
    display: flex;
    flex-direction: column;
}
.note.process {
    width: 197px;
    border-right: 1px solid #7f95b6;
}
.note.model {
    flex: 1;
}
.note label {
    height: 27px;
    padding-left: 2px;
    border-bottom: 1px solid #7f95b6;
    background: linear-gradient(#f2f6fc, #d8e3f2);
    color: #1b3a75;
    line-height: 26px;
}
.note-text {
    flex: 1;
    display: flex;
    color: #777;
}
.note-text textarea {
    flex: 1;
    min-width: 0;
    padding-left: 2px;
}
.note-text span {
    width: 14px;
    padding-top: 4px;
}

/* Marker arrows */
.mark {
    position: absolute;
    pointer-events: none;
}
.mark-left {
    left: 156px;
    top: 345px;
    width: 236px;
    height: 84px;
}
.mark-right {
    left: 1308px;
    top: 616px;
    width: 268px;
    height: 110px;
}
```
